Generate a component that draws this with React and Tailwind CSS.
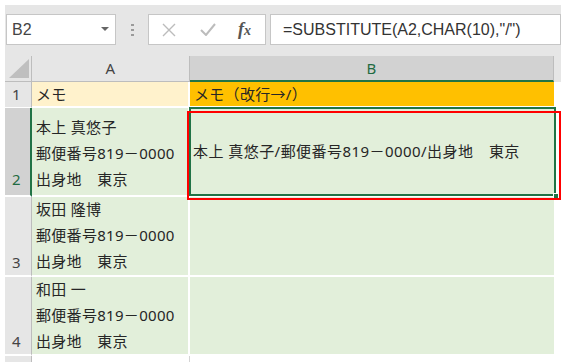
import React from 'react';

const font = { fontFamily: "'Noto Sans', 'Noto Sans CJK JP', sans-serif" };
const latin = { fontFamily: "'Liberation Sans', 'Noto Sans', sans-serif" };

function Toolbar() {
  return (
    <div className="flex h-[51px] items-start bg-[#e6e6e6] pt-[9px]">
      <div className="ml-[1px] flex h-[31px] w-[110px] items-center justify-between border border-[#c6c6c6] bg-white pl-[5px] pr-[6px]">
        <span className="text-[16px] text-[#444]" style={latin}>B2</span>
        <svg width="8" height="5" viewBox="0 0 8 5">
          <path d="M0 0 H8 L4 4 Z" fill="#666" />
        </svg>
      </div>
      <div className="flex h-[31px] w-[32px] items-center justify-center">
        <svg width="3" height="12" viewBox="0 0 3 12">
          <rect x="0" y="0" width="3" height="2" fill="#9a9a9a" />
          <rect x="0" y="5" width="3" height="2" fill="#9a9a9a" />
          <rect x="0" y="10" width="3" height="2" fill="#9a9a9a" />
        </svg>
      </div>
      <div className="flex h-[31px] w-[118px] items-center border border-[#c6c6c6] bg-white">
        <svg className="ml-[13px]" width="14" height="14" viewBox="0 0 14 14">
          <path d="M1 1 L13 13 M13 1 L1 13" stroke="#bcbcbc" strokeWidth="1.4" fill="none" />
        </svg>
        <svg className="ml-[24px]" width="16" height="13" viewBox="0 0 16 13">
          <path d="M1 7 L6 12 L15 1" stroke="#bcbcbc" strokeWidth="2" fill="none" />
        </svg>
        <span
          className="ml-[22px] text-[18px] font-bold italic text-[#555]"
          style={{ fontFamily: "'Liberation Serif', serif" }}
        >
          f<span className="text-[14px]">x</span>
        </span>
      </div>
      <div
        className="ml-[4px] flex h-[31px] flex-1 items-center border border-[#c6c6c6] bg-white pl-[12px] text-[16px] text-[#333]"
        style={latin}
      >
        =SUBSTITUTE(A2,CHAR(10),"/")
      </div>
    </div>
  );
}

function Lines({ lines, pb }) {
  return (
    <div className={`flex flex-col justify-end h-full pl-[4px] ${pb}`}>
      {lines.map((l, i) => (
        <div key={i} className="h-[26px] leading-[26px] whitespace-pre">
          {l}
        </div>
      ))}
    </div>
  );
}

const rows = [
  { n: '3', h: 'h-[80px]', pb: 'pb-[1px]', lines: ['坂田 隆博', '郵便番号819－0000', '出身地　東京'] },
  { n: '4', h: 'h-[79px]', pb: 'pb-[0px]', lines: ['和田 一', '郵便番号819－0000', '出身地　東京'] },
];

export default function App() {
  return (
    <div className="relative h-[362px] w-[573px] overflow-hidden bg-white pl-[5px] pt-[5px] text-[#262626]" style={font}>
      <div className="w-[556px]">
        <Toolbar />
        <div className="grid grid-cols-[27px_158px_364px_7px] text-[15px] tracking-[0.3px]">
          {/* header row */}
          <div className="relative h-[26px] border-b border-r border-[#bdbdbd] bg-[#e6e6e6]">
            <svg className="absolute bottom-[3px] right-[2px]" width="20" height="19" viewBox="0 0 20 19">
              <path d="M20 0 V19 H0 Z" fill="#bfbfbf" />
            </svg>
          </div>
          <div className="flex h-[26px] items-center justify-center border-b border-r border-[#bdbdbd] bg-[#e6e6e6] text-[#444]">
            A
          </div>
          <div className="flex h-[26px] items-center justify-center border-b-2 border-r border-b-[#217346] border-r-[#bdbdbd] bg-[#d2d2d2] text-[#1f6b42]">
            B
          </div>
          <div className="h-[26px] bg-[#e6e6e6]" />

          {/* row 1 */}
          <div className="flex h-[26px] items-center justify-center border-b border-r border-b-white border-r-[#bdbdbd] bg-[#e6e6e6] pr-[3px] text-[#444]">
            1
          </div>
          <div className="flex h-[26px] items-center border-b-2 border-r-2 border-white bg-[#fff2cc] pl-[4px]">
            メモ
          </div>
          <div className="flex h-[26px] items-center border-b-2 border-white bg-[#ffc000] pl-[4px]">
            メモ（改行→/）
          </div>
          <div className="h-[26px] bg-white" />

          {/* row 2 */}
          <div className="flex h-[89px] items-end justify-center border-b-2 border-r-2 border-b-white border-r-[#217346] bg-[#d2d2d2] pb-[3px] pr-[2px] text-[#1f6b42]">
            <span className="leading-[26px]">2</span>
          </div>
          <div className="h-[89px] border-b-2 border-r-2 border-white bg-[#e2efda]">
            <Lines lines={['本上 真悠子', '郵便番号819－0000', '出身地　東京']} pb="pb-[3px]" />
          </div>
          <div className="relative flex h-[89px] items-center border-b-2 border-white bg-[#e2efda] pl-[3px] tracking-[0.45px]">
            本上 真悠子/郵便番号819－0000/出身地　東京
            <div className="pointer-events-none absolute -left-[1px] -top-[1px] -right-[2px] -bottom-[1px] border-2 border-[#217346]" />
            <div className="absolute -bottom-[4px] -right-[5px] h-[6px] w-[6px] border border-white bg-[#217346]" />
          </div>
          <div className="h-[89px] bg-white" />

          {rows.map((r) => (
            <React.Fragment key={r.n}>
              <div className={`flex ${r.h} items-end justify-center border-b-2 border-r border-b-white border-r-[#bdbdbd] bg-[#e6e6e6] pr-[3px] text-[#444]`}>
                <span className="leading-[26px]">{r.n}</span>
              </div>
              <div className={`${r.h} border-b-2 border-r-2 border-white bg-[#e2efda]`}>
                <Lines lines={r.lines} pb={r.pb} />
              </div>
              <div className={`${r.h} border-b-2 border-white bg-[#e2efda]`} />
              <div className={`${r.h} bg-white`} />
            </React.Fragment>
          ))}

          {/* row 5 */}
          <div className="h-[20px] border-r border-[#bdbdbd] bg-[#e6e6e6]" />
          <div className="h-[20px] border-r border-[#d4d4d4] bg-white" />
          <div className="h-[20px] bg-white" />
          <div className="h-[20px] bg-white" />
        </div>
      </div>

      {/* red annotation */}
      <div className="pointer-events-none absolute left-[187px] top-[111px] h-[89px] w-[374px] border-2 border-[#ff0000]" />
    </div>
  );
}
